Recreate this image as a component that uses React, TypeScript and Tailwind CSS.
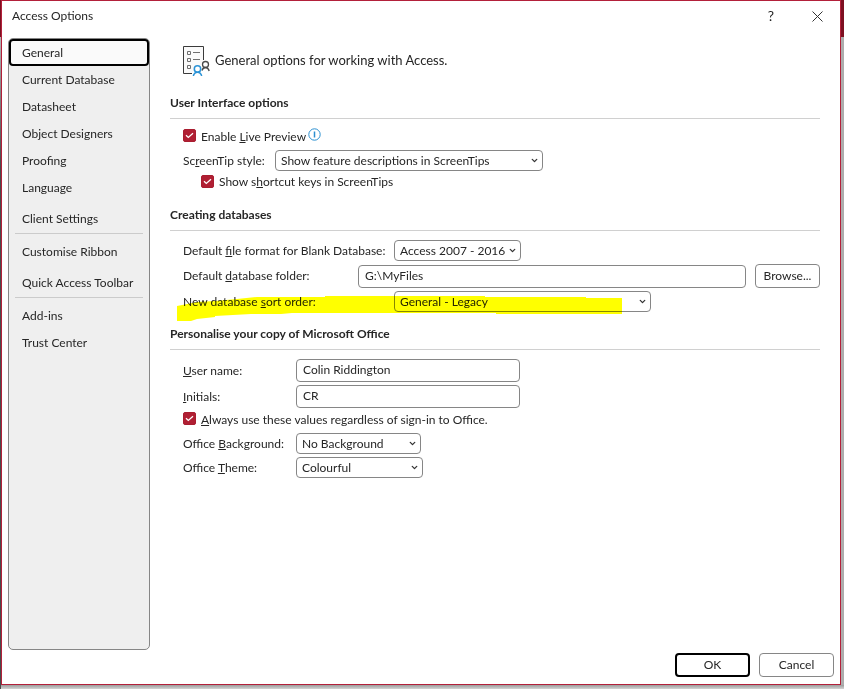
import type { ReactNode } from 'react';
import { ChevronDown } from 'lucide-react';

const navItems = [
  { label: 'General' },
  { label: 'Current Database' },
  { label: 'Datasheet' },
  { label: 'Object Designers' },
  { label: 'Proofing' },
  { label: 'Language' },
  { label: 'Client Settings', spaced: true, divider: true },
  { label: 'Customise Ribbon' },
  { label: 'Quick Access Toolbar', spaced: true, divider: true },
  { label: 'Add-ins' },
  { label: 'Trust Center' },
];

function Key({ children }: { children: ReactNode }) {
  return <span className="underline underline-offset-1">{children}</span>;
}

function Section({ title, children }: { title: string; children: ReactNode }) {
  return (
    <section>
      <h2 className="flex h-[31px] items-center border-b border-[#d0d0d0] font-bold">
        {title}
      </h2>
      <div className="pl-[13px]">{children}</div>
    </section>
  );
}

function Checkbox({ id, children }: { id: string; children: ReactNode }) {
  return (
    <div className="flex items-center gap-[5px]">
      <span className="relative mb-[2px] block h-[13px] w-[13px]">
        <input
          id={id}
          type="checkbox"
          defaultChecked
          className="peer block h-[13px] w-[13px] appearance-none rounded-xs border border-[#a91d30] checked:bg-[#b01f33]"
        />
        <svg
          viewBox="0 0 13 13"
          className="pointer-events-none absolute inset-0 hidden h-[13px] w-[13px] peer-checked:block"
          fill="none"
          stroke="#fff"
          strokeWidth="1.3"
        >
          <path d="M3 6.2 5.3 8.4 10 4.2" />
        </svg>
      </span>
      <label htmlFor={id} className="whitespace-nowrap">
        {children}
      </label>
    </div>
  );
}

function Select({ id, value, className }: { id: string; value: string; className: string }) {
  return (
    <div className={`relative shrink-0 ${className}`}>
      <select
        id={id}
        defaultValue={value}
        className="block h-[21px] w-full appearance-none rounded border border-[#868686] bg-white pr-3 pl-[5px]"
      >
        <option>{value}</option>
      </select>
      <ChevronDown
        size={9}
        strokeWidth={3.5}
        className="pointer-events-none absolute top-[6px] right-1 text-[#333]"
      />
    </div>
  );
}

function TextField({ id, value, className }: { id: string; value: string; className: string }) {
  return (
    <input
      id={id}
      type="text"
      defaultValue={value}
      className={`block h-[23px] rounded border border-[#868686] bg-white px-[6px] pb-[2px] text-[#262626] ${className}`}
    />
  );
}

function OptionsIcon() {
  return (
    <svg viewBox="0 0 28 31" className="h-[31px] w-7 shrink-0" fill="none">
      <path d="M9 28.5H1.5V1.5h20V17" fill="#fafafa" />
      <path d="M10 28.5H1.5V1.5h20V15" stroke="#3b3b3b" />
      <path
        d="M5.5 6.5h3v3h-3zM5.5 13.5h3v3h-3zM5.5 20.5h3v3h-3zM11 7.5h7M11 14.5h7"
        stroke="#6e6e6e"
      />
      <g stroke="#4a4a4a" strokeWidth="1.3">
        <circle cx="23.5" cy="19.5" r="3" fill="#fff" />
        <path d="M20 25.5c.5-1.8 1.800-3 3.500-3s3 1.200 3.700 3.500" />
      </g>
      <g stroke="#2b93d6" strokeWidth="1.5">
        <circle cx="15.5" cy="24" r="3.2" fill="#fff" />
        <path d="M11.3 31c.6-2.300 2.200-3.800 4.200-3.800s3.600 1.500 4.200 3.800" />
      </g>
    </svg>
  );
}

function InfoIcon() {
  return (
    <svg viewBox="0 0 13 13" className="h-[13px] w-[13px]" fill="none" stroke="#2b8fd0">
      <circle cx="6.5" cy="6.5" r="5.7" />
      <path d="M6.5 3.5v6" strokeWidth="1.5" />
    </svg>
  );
}

function MarkerStroke() {
  return (
    <svg
      viewBox="0 0 445 27"
      className="pointer-events-none absolute top-2 -left-[6px] h-[27px] w-[445px] mix-blend-multiply"
      fill="#ffff00"
    >
      <path d="M0 10 10 8 20 6 38 5 60 3 80 1 148 1V0H308V1H409V2H445V18H319V17H115L104 18H74L56 19 38 20V21L20 23 14 25H0Z" />
    </svg>
  );
}

function Sidebar() {
  return (
    <nav className="w-[142px] shrink-0 rounded-[5px] border border-[#868686] bg-[#efefef]">
      <ul>
        {navItems.map((item, i) => (
          <li key={item.label} className={item.spaced ? 'mt-1' : ''}>
            <button
              type="button"
              className={
                i === 0
                  ? 'block h-[27px] w-full rounded bg-[#fafafa] pl-[13px] text-left outline-2 -outline-offset-2 outline-black'
                  : 'block h-[27px] w-full pl-[13px] text-left'
              }
            >
              {item.label}
            </button>
            {item.divider && <div className="mx-[6px] mt-px mb-1 h-px bg-[#cbcbcb]" />}
          </li>
        ))}
      </ul>
    </nav>
  );
}

function TitleBar() {
  return (
    <header className="flex h-[37px] items-start pt-[6px] pr-[17px] pl-[10px]">
      <h1 className="h-[18px] flex-1 leading-[18px]">Access Options</h1>
      <button type="button" aria-label="Help" className="mr-[37px] h-[18px] w-2 text-sm leading-[18px]">
        ?
      </button>
      <button type="button" aria-label="Close" className="grid h-[18px] w-[11px] place-items-center">
        <svg viewBox="0 0 11 11" className="h-[11px] w-[11px]" stroke="#333">
          <path d="M.5.5l10 10M10.5.5l-10 10" />
        </svg>
      </button>
    </header>
  );
}

export default function App() {
  return (
    <div className="grid min-h-screen grid-cols-[1px_1fr_3px] grid-rows-[1fr_4px] bg-[#bdbdbd] font-['Lato','Open_Sans',sans-serif] text-xs text-[#262626]">
      <div className="row-span-2 bg-linear-to-b from-[#7d1021] from-[37px] via-[#b5b5b5] via-[37px] to-[#4a4a4a] to-[167px]" />
      <div className="flex flex-col border border-[#b3203a] bg-white">
        <TitleBar />

        <div className="flex flex-1 pr-5 pl-[6px]">
          <Sidebar />
          <main className="ml-5 min-w-0 flex-1">
            <div className="flex items-center gap-1 pt-[7px] pb-3 pl-3 text-[13px]">
              <OptionsIcon />
              <p className="pl-px">General options for working with Access.</p>
            </div>

            <Section title="User Interface options">
              <div className="flex h-[31px] items-center gap-[2px] pt-1">
                <Checkbox id="live-preview">
                  Enable <Key>L</Key>ive Preview
                </Checkbox>
                <span className="pb-1">
                  <InfoIcon />
                </span>
              </div>
              <div className="flex h-[21px] items-center">
                <label htmlFor="screentip" className="w-[92px] whitespace-nowrap">
                  Sc<Key>r</Key>eenTip style:
                </label>
                <Select id="screentip" value="Show feature descriptions in ScreenTips" className="w-[268px]" />
              </div>
              <div className="flex h-[22px] items-center pl-[18px]">
                <Checkbox id="shortcut-keys">
                  Show s<Key>h</Key>ortcut keys in ScreenTips
                </Checkbox>
              </div>
            </Section>

            <div className="h-[7px]" />
            <Section title="Creating databases">
              <div className="flex items-center pt-[9px]">
                <label htmlFor="file-format" className="w-[211px] whitespace-nowrap">
                  Default <Key>f</Key>ile format for Blank Database:
                </label>
                <Select id="file-format" value="Access 2007 - 2016" className="w-[127px]" />
              </div>
              <div className="flex items-center pt-[3px]">
                <label htmlFor="db-folder" className="w-[175px] shrink-0">
                  Default <Key>d</Key>atabase folder:
                </label>
                <TextField id="db-folder" value="G:\MyFiles" className="min-w-0 flex-1" />
                <button
                  type="button"
                  className="ml-[9px] h-6 w-[65px] shrink-0 rounded border border-[#868686] bg-white"
                >
                  Browse...
                </button>
              </div>
              <div className="relative flex items-center pt-[3px]">
                <label htmlFor="sort-order" className="w-[211px] whitespace-nowrap">
                  New database <Key>s</Key>ort order:
                </label>
                <Select id="sort-order" value="General - Legacy" className="w-[257px]" />
                <MarkerStroke />
              </div>
            </Section>

            <div className="h-[7px]" />
            <Section title="Personalise your copy of Microsoft Office">
              <div className="flex items-center pt-[9px]">
                <label htmlFor="user-name" className="w-[113px]">
                  <Key>U</Key>ser name:
                </label>
                <TextField id="user-name" value="Colin Riddington" className="w-[224px]" />
              </div>
              <div className="flex items-center pt-[3px]">
                <label htmlFor="initials" className="w-[113px]">
                  <Key>I</Key>nitials:
                </label>
                <TextField id="initials" value="CR" className="w-[224px]" />
              </div>
              <div className="flex h-[22px] items-center pt-px">
                <Checkbox id="always-use">
                  <Key>A</Key>lways use these values regardless of sign-in to Office.
                </Checkbox>
              </div>
              <div className="flex items-center pt-[3px]">
                <label htmlFor="background" className="w-[113px] whitespace-nowrap">
                  Office <Key>B</Key>ackground:
                </label>
                <Select id="background" value="No Background" className="w-[125px]" />
              </div>
              <div className="flex items-center pt-[3px]">
                <label htmlFor="theme" className="w-[113px] whitespace-nowrap">
                  Office <Key>T</Key>heme:
                </label>
                <Select id="theme" value="Colourful" className="w-[127px]" />
              </div>
            </Section>
          </main>
        </div>

        <footer className="flex justify-end gap-[9px] pt-[3px] pr-[6px] pb-[7px]">
          <button type="button" className="h-6 w-[75px] rounded border-2 border-black bg-white">
            OK
          </button>
          <button type="button" className="h-6 w-[75px] rounded border border-[#868686] bg-white">
            Cancel
          </button>
        </footer>
      </div>
      <div className="bg-linear-to-b from-[#7d1021] from-[37px] to-[#adadad] to-[37px]" />
      <div className="col-span-2 bg-linear-to-b from-[#9c9c9c] to-[#d4d4d4]" />
    </div>
  );
}
